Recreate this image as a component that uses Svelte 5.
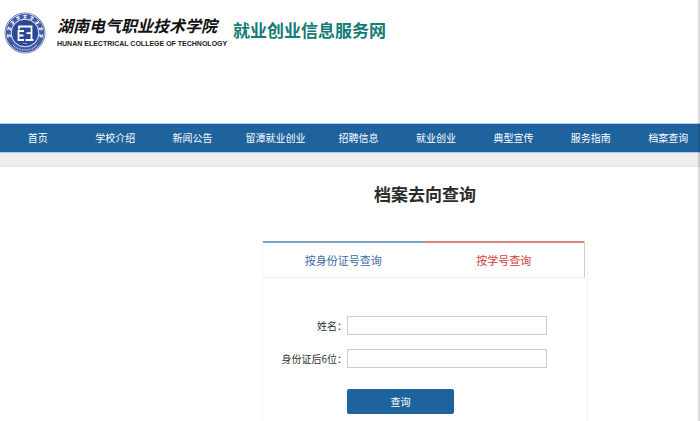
<script>
  const navItems = ['首页', '学校介绍', '新闻公告', '留潭就业创业', '招聘信息', '就业创业', '典型宣传', '服务指南', '档案查询']

  // Small strokes of the lettering that runs round the top of the seal
  const sealMarks = [-100, -75, -50, -25, 0, 25, 50, 75, 100]

  let name = $state('')
  let idTail = $state('')
</script>

<div class="page">
  <header class="header">
    <svg class="seal" viewBox="0 0 42 42" aria-hidden="true">
      <circle cx="21" cy="21" r="20" fill="#f4f6fc" stroke="#6f83bd" stroke-width="1" />
      <circle cx="21" cy="21" r="16.6" fill="none" stroke="#3f5aa6" stroke-width="5" />
      <circle cx="21" cy="21" r="13.8" fill="#2d4695" stroke="#dce3f4" stroke-width="1" />
      {#each sealMarks as angle}
        <path
          d="M19.2 3.6h3.6M21 2.8v4M19.4 6.2l3.2-1.2"
          transform="rotate({angle} 21 21)"
          fill="none"
          stroke="#fff"
          stroke-width=".9"
        />
      {/each}
      <path d="M9 33a17 17 0 0 0 24 0" fill="none" stroke="#c9d2ec" stroke-width="1.2" stroke-dasharray="1 .7" />
      <path
        d="M15 17.5v-3h12.5v13.5M21.5 28h8M22.5 21.2h5M20 19h-5.5v9h5.5M14.5 23.5h5"
        fill="none"
        stroke="#fff"
        stroke-width="1.8"
      />
      <path d="M19 31.5h4" stroke="#a9b8df" stroke-width=".8" />
    </svg>
    <div class="school">
      <span class="school-cn">湖南电气职业技术学院</span>
      <span class="school-en">HUNAN ELECTRICAL COLLEGE OF TECHNOLOGY</span>
    </div>
    <span class="site-name">就业创业信息服务网</span>
  </header>

  <nav class="nav">
    <div class="nav-list">
      {#each navItems as item}
        <a href="#top">{item}</a>
      {/each}
    </div>
  </nav>
  <div class="strip"></div>

  <main class="main">
    <h1>档案去向查询</h1>

    <section class="card">
      <div class="tabs">
        <button type="button" class="tab tab-id">按身份证号查询</button>
        <button type="button" class="tab tab-no">按学号查询</button>
      </div>

      <form class="form" onsubmit={(e) => e.preventDefault()}>
        <label for="name">姓名：</label>
        <input id="name" type="text" bind:value={name} />
        <label for="id-tail">身份证后6位：</label>
        <input id="id-tail" type="text" bind:value={idTail} />
        <button type="submit" class="submit">查询</button>
      </form>
    </section>
  </main>
</div>

<style>
  :global(body) {
    background: #fff;
    color: #333;
    font-family: "Noto Sans CJK SC", sans-serif;
    font-size: 10px;
  }

  .page { position: relative; }
  /* Soft shadow down the right edge */
  .page::after {
    content: "";
    position: absolute;
    inset: 0 0 0 auto;
    width: 3px;
    background: linear-gradient(to right, transparent, rgba(0, 0, 0, .2));
    pointer-events: none;
  }

  .header {
    display: flex;
    align-items: flex-start;
    height: 111px;
    padding: 12px 4px 0;
  }
  .seal { width: 42px; height: 42px; flex: none; }

  .school {
    display: flex;
    flex-direction: column;
    width: 176px;
    margin-left: 11px;
    white-space: nowrap;
  }
  .school-cn {
    color: #111;
    font-size: 16px;
    font-style: italic;
    font-weight: 700;
    line-height: 26px;
  }
  .school-en {
    color: #222;
    font-family: "Liberation Sans", sans-serif;
    font-size: 7px;
    font-weight: 700;
    line-height: 12px;
  }
  .site-name {
    color: #147b76;
    font-size: 17px;
    font-weight: 700;
    line-height: 36px;
    white-space: nowrap;
  }

  .nav {
    background: #1e639e;
    border-top: 1px solid #a9cbe8;
    border-bottom: 1px solid #a9cbe8;
    overflow: hidden;
  }
  /* The last column runs slightly past the window edge */
  .nav-list {
    display: grid;
    grid-template-columns: repeat(3, 7fr) 8fr repeat(5, 7fr);
    margin: 0 -7px 0 -1px;
  }
  .nav a {
    color: #fff;
    line-height: 28px;
    text-align: center;
    text-decoration: none;
    white-space: nowrap;
  }
  .strip {
    height: 13px;
    background: #eee;
    border-bottom: 1px solid #e4e4e4;
  }

  .main {
    display: flex;
    flex-direction: column;
    align-items: center;
    padding: 12px 0 0 150px;
  }
  h1 {
    margin: 0;
    color: #2b2b2b;
    font-size: 17px;
    font-weight: 700;
    line-height: 30px;
  }

  .card {
    box-sizing: border-box;
    width: 326px;
    margin-top: 32px;
    padding-bottom: 7px;
    border: solid #f2f2f2;
    border-width: 0 1px;
  }
  .tabs {
    display: grid;
    grid-template-columns: 1fr 1fr;
    margin-right: 2px;
    border-right: 1px solid #ccc;
    border-bottom: 1px solid #f0f0f0;
  }
  .tab {
    padding: 0;
    background: none;
    border: 0;
    font-family: inherit;
    font-size: 11px;
    line-height: 34px;
    cursor: pointer;
  }
  .tab-id { color: #3c6ba5; border-top: 2px solid #7ba3c7; }
  .tab-no { color: #d0403c; border-top: 2px solid #dc8380; }

  .form {
    display: grid;
    grid-template-columns: 84px 200px;
    row-gap: 14px;
    align-items: center;
    padding-top: 38px;
  }
  .form label { text-align: right; white-space: nowrap; }
  .form input {
    box-sizing: border-box;
    height: 19px;
    padding: 0 4px;
    background: #fff;
    border: 1px solid #ccc;
    font: inherit;
  }
  .submit {
    grid-column: 2;
    width: 107px;
    height: 25px;
    margin-top: 7px;
    padding: 0;
    color: #fff;
    background: #1e639e;
    border: 0;
    border-radius: 2px;
    font-family: inherit;
    font-size: 10px;
    cursor: pointer;
  }
</style>
